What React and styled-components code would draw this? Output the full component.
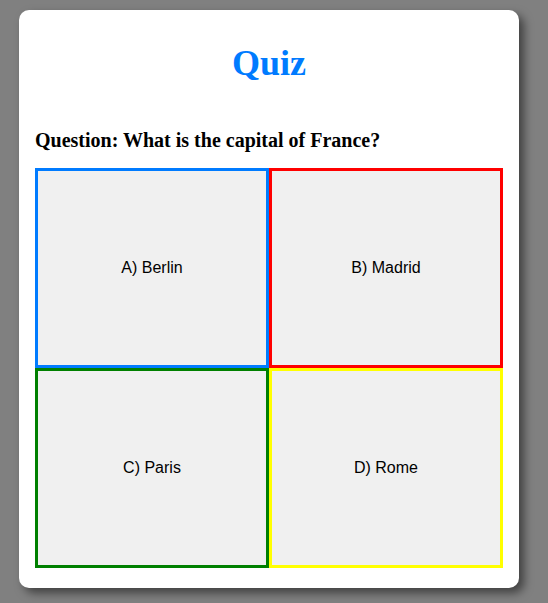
import React from 'react';
import styled, { createGlobalStyle } from 'styled-components';

const GlobalStyle = createGlobalStyle`
  html, body {
    margin: 0;
    padding: 0;
    background: #808080;
    font-family: 'Liberation Serif', 'Times New Roman', serif;
  }
`;

const Page = styled.div`
  padding: 10px 19px;
  min-height: 603px;
  box-sizing: border-box;
`;

const Card = styled.div`
  width: 500px;
  box-sizing: border-box;
  background: #ffffff;
  border-radius: 10px;
  box-shadow: 5px 5px 10px rgba(0, 0, 0, 0.5);
  padding: 20px 16px 20px;
`;

const Title = styled.h1`
  margin: 0;
  padding-top: 11px;
  text-align: center;
  color: #007bff;
  font-size: 36px;
  line-height: 44px;
  font-weight: bold;
`;

const Question = styled.h2`
  margin: 44px 0 16px;
  font-size: 20px;
  font-weight: bold;
  color: #000;
`;

const Grid = styled.div`
  display: grid;
  grid-template-columns: 1fr 1fr;
  grid-auto-rows: 200px;
`;

const Option = styled.button`
  border: 3px solid ${(p) => p.$color};
  background: #f0f0f0;
  font-family: 'Liberation Sans', Arial, sans-serif;
  font-size: 16px;
  color: #000;
  cursor: pointer;
`;

const options = [
  { label: 'A) Berlin', color: '#007bff' },
  { label: 'B) Madrid', color: '#ff0000' },
  { label: 'C) Paris', color: '#008000' },
  { label: 'D) Rome', color: '#ffff00' },
];

const App = () => {
  return (
    <Page>
      <GlobalStyle />
      <Card>
        <Title>Quiz</Title>
        <Question>Question: What is the capital of France?</Question>
        <Grid>
          {options.map((opt) => (
            <Option key={opt.label} $color={opt.color}>
              {opt.label}
            </Option>
          ))}
        </Grid>
      </Card>
    </Page>
  );
};

export default App;
